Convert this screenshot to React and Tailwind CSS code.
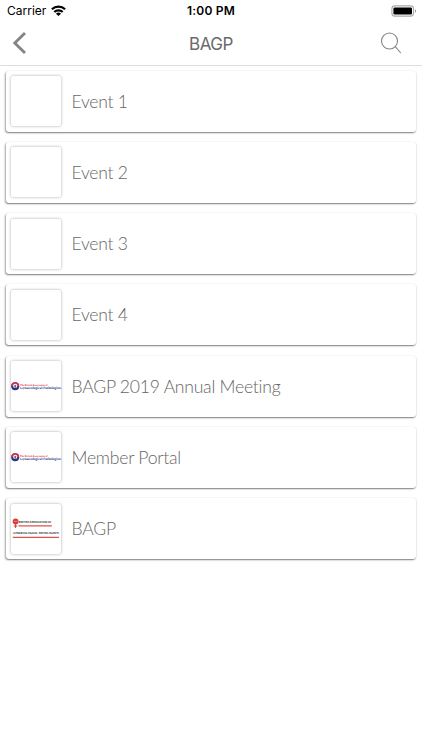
const EVENTS = [
  { title: 'Event 1' },
  { title: 'Event 2' },
  { title: 'Event 3' },
  { title: 'Event 4' },
  { title: 'BAGP 2019 Annual Meeting', logo: 'association' },
  { title: 'Member Portal', logo: 'association' },
  { title: 'BAGP', logo: 'lines' },
]

function AssociationLogo() {
  return (
    <svg width="50" height="50" viewBox="0 0 50 50" className="overflow-visible" textRendering="geometricPrecision">
      <circle cx="4.2" cy="25.2" r="4" fill="#28357f" />
      <path d="M0.2 25.2a4 4 0 0 1 8 0z" fill="#d92d3c" />
      <circle cx="4.2" cy="24.9" r="2.1" fill="#fff" />
      <path d="M4.2 23.8v4.6M3.1 25h2.2" stroke="#28357f" strokeWidth="0.8" />
      <text x="9" y="24.7" textLength="27.5" lengthAdjust="spacingAndGlyphs" className="font-['Liberation_Serif',serif] text-[2.9px] font-bold" fill="#e0303e">
        The British Association of
      </text>
      <text x="9" y="28.2" textLength="41" lengthAdjust="spacingAndGlyphs" className="font-['Liberation_Serif',serif] text-[3.6px] font-bold" fill="#28357f">
        Gynaecological Pathologists
      </text>
    </svg>
  )
}

function LinesLogo() {
  return (
    <svg width="50" height="50" viewBox="0 0 50 50" className="overflow-visible" textRendering="geometricPrecision">
      <circle cx="4.6" cy="17.4" r="2.9" fill="#da3b35" />
      <path d="M4.6 20v4M2.8 22h3.6" stroke="#da3b35" strokeWidth="1" />
      <path d="M3 17.4h3.2" stroke="#f3b6b3" strokeWidth="0.6" />
      <text x="7.8" y="18.5" textLength="32.5" lengthAdjust="spacingAndGlyphs" className="font-['Liberation_Sans',sans-serif] text-[3px] font-bold" fill="#222">
        BRITISH ASSOCIATION OF
      </text>
      <path d="M7.6 21.8h33.2" stroke="#e0504a" strokeWidth="1.2" />
      <text x="2.2" y="30.1" textLength="45.5" lengthAdjust="spacingAndGlyphs" className="font-['Liberation_Sans',sans-serif] text-[3px] font-bold" fill="#222">
        GYNAECOLOGICAL PATHOLOGISTS
      </text>
      <path d="M1.8 33.4h46.2" stroke="#e0504a" strokeWidth="1.2" />
    </svg>
  )
}

function StatusBar() {
  return (
    <div className="grid h-[21px] grid-cols-3 items-center font-['Inter','Liberation_Sans',sans-serif] text-black">
      <div className="flex items-center gap-[5px] pl-[7px]">
        <span className="text-[12px] leading-4">Carrier</span>
        <svg width="15" height="11" viewBox="0 0 15 11" fill="none" stroke="#000" strokeWidth="2.2">
          <path d="M0.9 4.3a9.4 9.4 0 0 1 13.2 0" />
          <path d="M3.3 7a6 6 0 0 1 8.4 0" />
          <path d="M7.5 11L5 8.7a3.4 3.4 0 0 1 5 0z" fill="#000" stroke="none" />
        </svg>
      </div>
      <span className="text-center text-[12px] leading-4 font-semibold tracking-[0.2px]">1:00 PM</span>
      <div className="flex justify-end pr-[5px]">
        <svg width="26" height="12" viewBox="0 0 26 12">
          <rect x="0.9" y="0.9" width="21.6" height="10.2" rx="2.8" fill="#fff" stroke="#aaa" strokeWidth="1.1" />
          <rect x="2.4" y="2.4" width="18.6" height="7.2" rx="1.4" fill="#000" />
          <path d="M24 4.2c1.5.6 1.5 3 0 3.6z" fill="#999" />
        </svg>
      </div>
    </div>
  )
}

function Header() {
  return (
    <div className="grid h-[45px] grid-cols-3 items-center border-b border-[#dedede]">
      <button className="w-fit pl-[12px]" aria-label="Back">
        <svg width="16" height="24" viewBox="0 0 16 24" fill="none" stroke="#858585" strokeWidth="2.9">
          <path d="M13 2L2.8 12L13 22" />
        </svg>
      </button>
      <h1 className="pt-px text-center font-['Inter','Liberation_Sans',sans-serif] text-[17px] leading-6 font-normal tracking-[-0.5px] text-[#6a6a6a]">
        BAGP
      </h1>
      <button className="w-fit justify-self-end pr-[20px]" aria-label="Search">
        <svg width="22" height="22" viewBox="0 0 22 22" fill="none" stroke="#858585" strokeWidth="1.1">
          <circle cx="9.5" cy="9" r="8" />
          <path d="M15.2 14.7L20.8 21" />
        </svg>
      </button>
    </div>
  )
}

function EventCard({ title, logo }) {
  return (
    <li className="flex h-[61px] items-center rounded-[3px] bg-white pl-[5px] shadow-[-1px_1px_2px_rgba(0,0,0,0.36),0_1px_1px_rgba(0,0,0,0.2),1px_0_2px_rgba(0,0,0,0.05)]">
      <div className="flex size-[50px] shrink-0 items-center justify-center rounded-[2px] bg-white shadow-[0_0_3px_rgba(0,0,0,0.35)]">
        {logo === 'association' && <AssociationLogo />}
        {logo === 'lines' && <LinesLogo />}
      </div>
      <span className="ml-[10.5px] pt-px font-['Lato',sans-serif] text-[17.6px] leading-6 font-light tracking-[-0.25px] text-[#666]">{title}</span>
    </li>
  )
}

export default function App() {
  return (
    <div className="h-[750px] w-full overflow-hidden bg-white">
      <StatusBar />
      <Header />
      <ul className="flex flex-col gap-[10.25px] pt-[4.5px] pr-[6px] pl-[6px]">
        {EVENTS.map((event) => (
          <EventCard key={event.title} {...event} />
        ))}
      </ul>
    </div>
  )
}
